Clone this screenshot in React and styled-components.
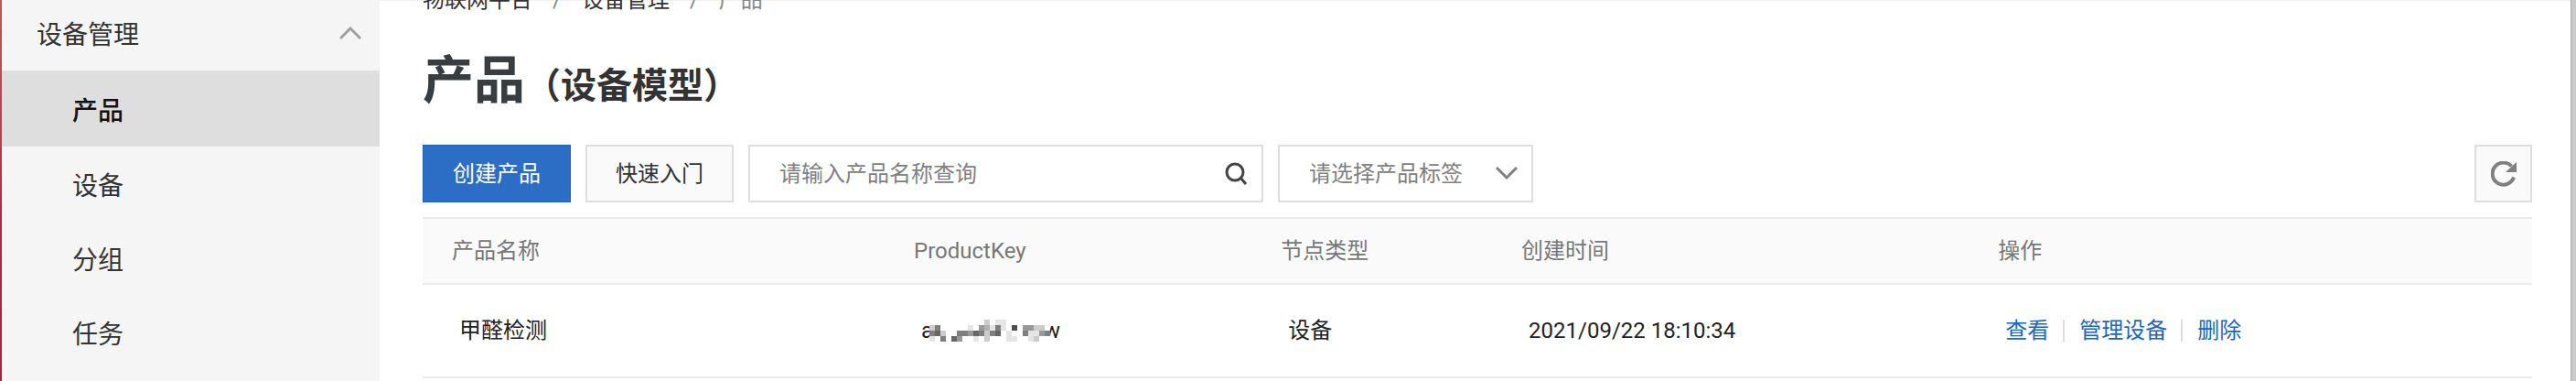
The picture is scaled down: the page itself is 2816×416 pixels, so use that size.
import React from 'react';
import styled, { createGlobalStyle } from 'styled-components';

const GlobalStyle = createGlobalStyle`
  * { box-sizing: border-box; }
  body {
    margin: 0;
    background: #fff;
    color: #222;
    font-family: Roboto, "Noto Sans CJK SC", sans-serif;
    font-size: 24px;
    line-height: 32px;
  }
  button, input, select { font: inherit; color: inherit; margin: 0; }
`;

const Page = styled.div`
  display: flex;
  min-height: 100vh;
  background: linear-gradient(#f0f0f0, #f0f0f0) top / 100% 1px no-repeat;
`;

const WindowEdge = styled.div`
  flex: none;
  width: ${p => (p.$side === 'left' ? 2 : 6)}px;
  background: ${p => (p.$side === 'left'
    ? 'linear-gradient(#c4574d 0%, #bd3f4c 35%, #b7264b 55%, #b01f47 100%)'
    : '#cacaca')};
  border-left: ${p => (p.$side === 'left' ? 'none' : '1px solid #a8a8a8')};
`;

const Sidebar = styled.nav`
  flex: none;
  width: 413px;
  background: #f5f5f5;
  font-size: 28px;
  line-height: 36px;
  color: #333;
`;

const GroupToggle = styled.button`
  display: flex;
  align-items: center;
  justify-content: space-between;
  width: 100%;
  height: 77px;
  padding: 0 20px 0 38px;
  border: 0;
  background: none;
  text-align: left;
`;

const MenuList = styled.ul`
  list-style: none;
  margin: 0;
  padding: 0;
`;

const MenuLink = styled.a`
  display: flex;
  align-items: center;
  height: ${p => (p.$active ? 83 : 81)}px;
  padding: 6px 0 0 77px;
  text-decoration: none;
  color: ${p => (p.$active ? '#111' : '#333')};
  font-weight: ${p => (p.$active ? 500 : 400)};
  background: ${p => (p.$active ? '#dedede' : 'transparent')};
`;

const Main = styled.main`
  flex: 1;
  min-width: 0;
  padding: 0 42px 0 47px;
`;

const Breadcrumb = styled.ol`
  display: flex;
  align-items: flex-end;
  gap: 22px;
  height: 16px;
  margin: 0;
  padding: 0;
  overflow: hidden;
  list-style: none;
  color: #888;
  a { color: #333; text-decoration: none; }
`;

const Title = styled.h1`
  margin: 32px 0 30px;
  font-size: 56px;
  line-height: 80px;
  font-weight: 700;
  color: #373d41;
  small {
    font-size: 39px;
    line-height: 40px;
    color: #333;
  }
`;

const Toolbar = styled.div`
  display: flex;
  gap: 16px;
  margin-bottom: 16px;
`;

const Button = styled.button`
  width: 162px;
  height: 63px;
  padding: 0;
  border: ${p => (p.$primary ? '1px solid #1f5fbf' : '2px solid #dedede')};
  background: ${p => (p.$primary ? '#2c6ec6' : '#fafafa')};
  color: ${p => (p.$primary ? '#fff' : '#333')};
`;

const RefreshButton = styled(Button)`
  display: flex;
  align-items: center;
  justify-content: center;
  width: 63px;
  margin-left: auto;
`;

const Field = styled.div`
  display: flex;
  align-items: center;
  width: ${p => p.$width}px;
  height: 63px;
  padding: 0 15px 0 32px;
  border: 2px solid #dedede;
  background: #fff;
  color: #808080;
`;

const SearchInput = styled.input`
  flex: 1;
  min-width: 0;
  padding: 0;
  border: 0;
  outline: 0;
  background: none;
  &::placeholder { color: #808080; opacity: 1; }
`;

const SearchButton = styled.button`
  display: flex;
  padding: 0;
  border: 0;
  background: none;
`;

const TagSelect = styled.select`
  flex: 1;
  min-width: 0;
  padding: 0;
  border: 0;
  outline: 0;
  appearance: none;
  background: none;
`;

const Table = styled.table`
  width: 100%;
  table-layout: fixed;
  border-collapse: separate;
  border-spacing: 0;
`;

const HeadCell = styled.th`
  width: ${p => p.$width};
  height: 74px;
  padding: 0 0 0 32px;
  border: solid #ebebeb;
  border-width: 2px 0;
  background: #fafafa;
  color: #777;
  font-weight: 400;
  text-align: left;
`;

const Cell = styled.td`
  height: 102px;
  padding: 0 0 0 40px;
  border-bottom: 2px solid #ebebeb;
`;

const Actions = styled.div`
  display: flex;
  align-items: center;
`;

const ActionLink = styled.a`
  color: #1a66c4;
  text-decoration: none;
  line-height: 24px;
  & + & {
    margin-left: 15px;
    padding-left: 16px;
    border-left: 2px solid #ddd;
  }
`;

const MaskedKey = styled.span`
  display: flex;
  align-items: center;
`;

const MosaicSvg = styled.svg`
  position: relative;
  margin: 0 -7px 0 -4px;
  background: #fff;
`;

/* Darkness of each tile, 0 (white) to 9 (nearly black). */
const MOSAIC = [
  '0000000000201100000000',
  '2500000104315107044220',
  '5620055465256010051145',
  '1050640010200011001200',
];

function Mosaic() {
  return (
    <MosaicSvg width="132" height="24" viewBox="0 0 22 4" shapeRendering="crispEdges" aria-hidden="true">
      {MOSAIC.map((row, y) => [...row].map((v, x) => (
        <rect key={x + '-' + y} x={x} y={y} width="1" height="1" fill="#000" fillOpacity={v / 10} />
      )))}
    </MosaicSvg>
  );
}

const COLUMNS = [
  ['产品名称', '21.9%'],
  ['ProductKey', '17.4%'],
  ['节点类型', '11.4%'],
  ['创建时间', '22.6%'],
  ['操作', 'auto'],
];

export default function App() {
  return (
    <>
      <GlobalStyle />
      <Page>
        <WindowEdge $side="left" />
        <Sidebar aria-label="设备管理">
          <GroupToggle type="button" aria-expanded="true">
            设备管理
            <svg width="24" height="20" viewBox="0 0 24 20" fill="none" stroke="#a0a0a0" strokeWidth="3" aria-hidden="true">
              <path d="M1 13 12 2l11 11" />
            </svg>
          </GroupToggle>
          <MenuList>
            {['产品', '设备', '分组', '任务'].map((name, i) => (
              <li key={name}>
                <MenuLink href="#" $active={i === 0} aria-current={i === 0 ? 'page' : undefined}>{name}</MenuLink>
              </li>
            ))}
          </MenuList>
        </Sidebar>
        <Main>
          <Breadcrumb>
            <li><a href="#">物联网平台</a></li>
            <li aria-hidden="true">/</li>
            <li><a href="#">设备管理</a></li>
            <li aria-hidden="true">/</li>
            <li>产品</li>
          </Breadcrumb>
          <Title>产品<small>（设备模型）</small></Title>
          <Toolbar>
            <Button type="button" $primary>创建产品</Button>
            <Button type="button">快速入门</Button>
            <Field $width={563}>
              <SearchInput type="text" aria-label="产品名称" placeholder="请输入产品名称查询" />
              <SearchButton type="button" aria-label="查询">
                <svg width="26" height="28" viewBox="0 0 26 28" fill="none" stroke="#444" strokeWidth="3" aria-hidden="true">
                  <circle cx="12" cy="12" r="9" />
                  <path d="m18 18 6 7" />
                </svg>
              </SearchButton>
            </Field>
            <Field $width={279}>
              <TagSelect aria-label="产品标签" defaultValue="">
                <option value="">请选择产品标签</option>
              </TagSelect>
              <svg width="24" height="18" viewBox="0 0 24 18" fill="none" stroke="#808080" strokeWidth="3" aria-hidden="true">
                <path d="m1 2 11 11L23 2" />
              </svg>
            </Field>
            <RefreshButton type="button" aria-label="刷新">
              <svg width="28" height="28" viewBox="0 0 28 28" aria-hidden="true">
                <path d="M25 17.500A12 12 0 1 1 22.500 5.500" fill="none" stroke="#808080" strokeWidth="4" />
                <path d="M28 1v11H16z" fill="#808080" />
              </svg>
            </RefreshButton>
          </Toolbar>
          <Table>
            <thead>
              <tr>
                {COLUMNS.map(([name, width]) => <HeadCell key={name} scope="col" $width={width}>{name}</HeadCell>)}
              </tr>
            </thead>
            <tbody>
              <tr>
                <Cell>甲醛检测</Cell>
                <Cell><MaskedKey>a<Mosaic />w</MaskedKey></Cell>
                <Cell>设备</Cell>
                <Cell>2021/09/22 18:10:34</Cell>
                <Cell>
                  <Actions>
                    <ActionLink href="#">查看</ActionLink>
                    <ActionLink href="#">管理设备</ActionLink>
                    <ActionLink href="#">删除</ActionLink>
                  </Actions>
                </Cell>
              </tr>
            </tbody>
          </Table>
        </Main>
        <WindowEdge $side="right" />
      </Page>
    </>
  );
}
